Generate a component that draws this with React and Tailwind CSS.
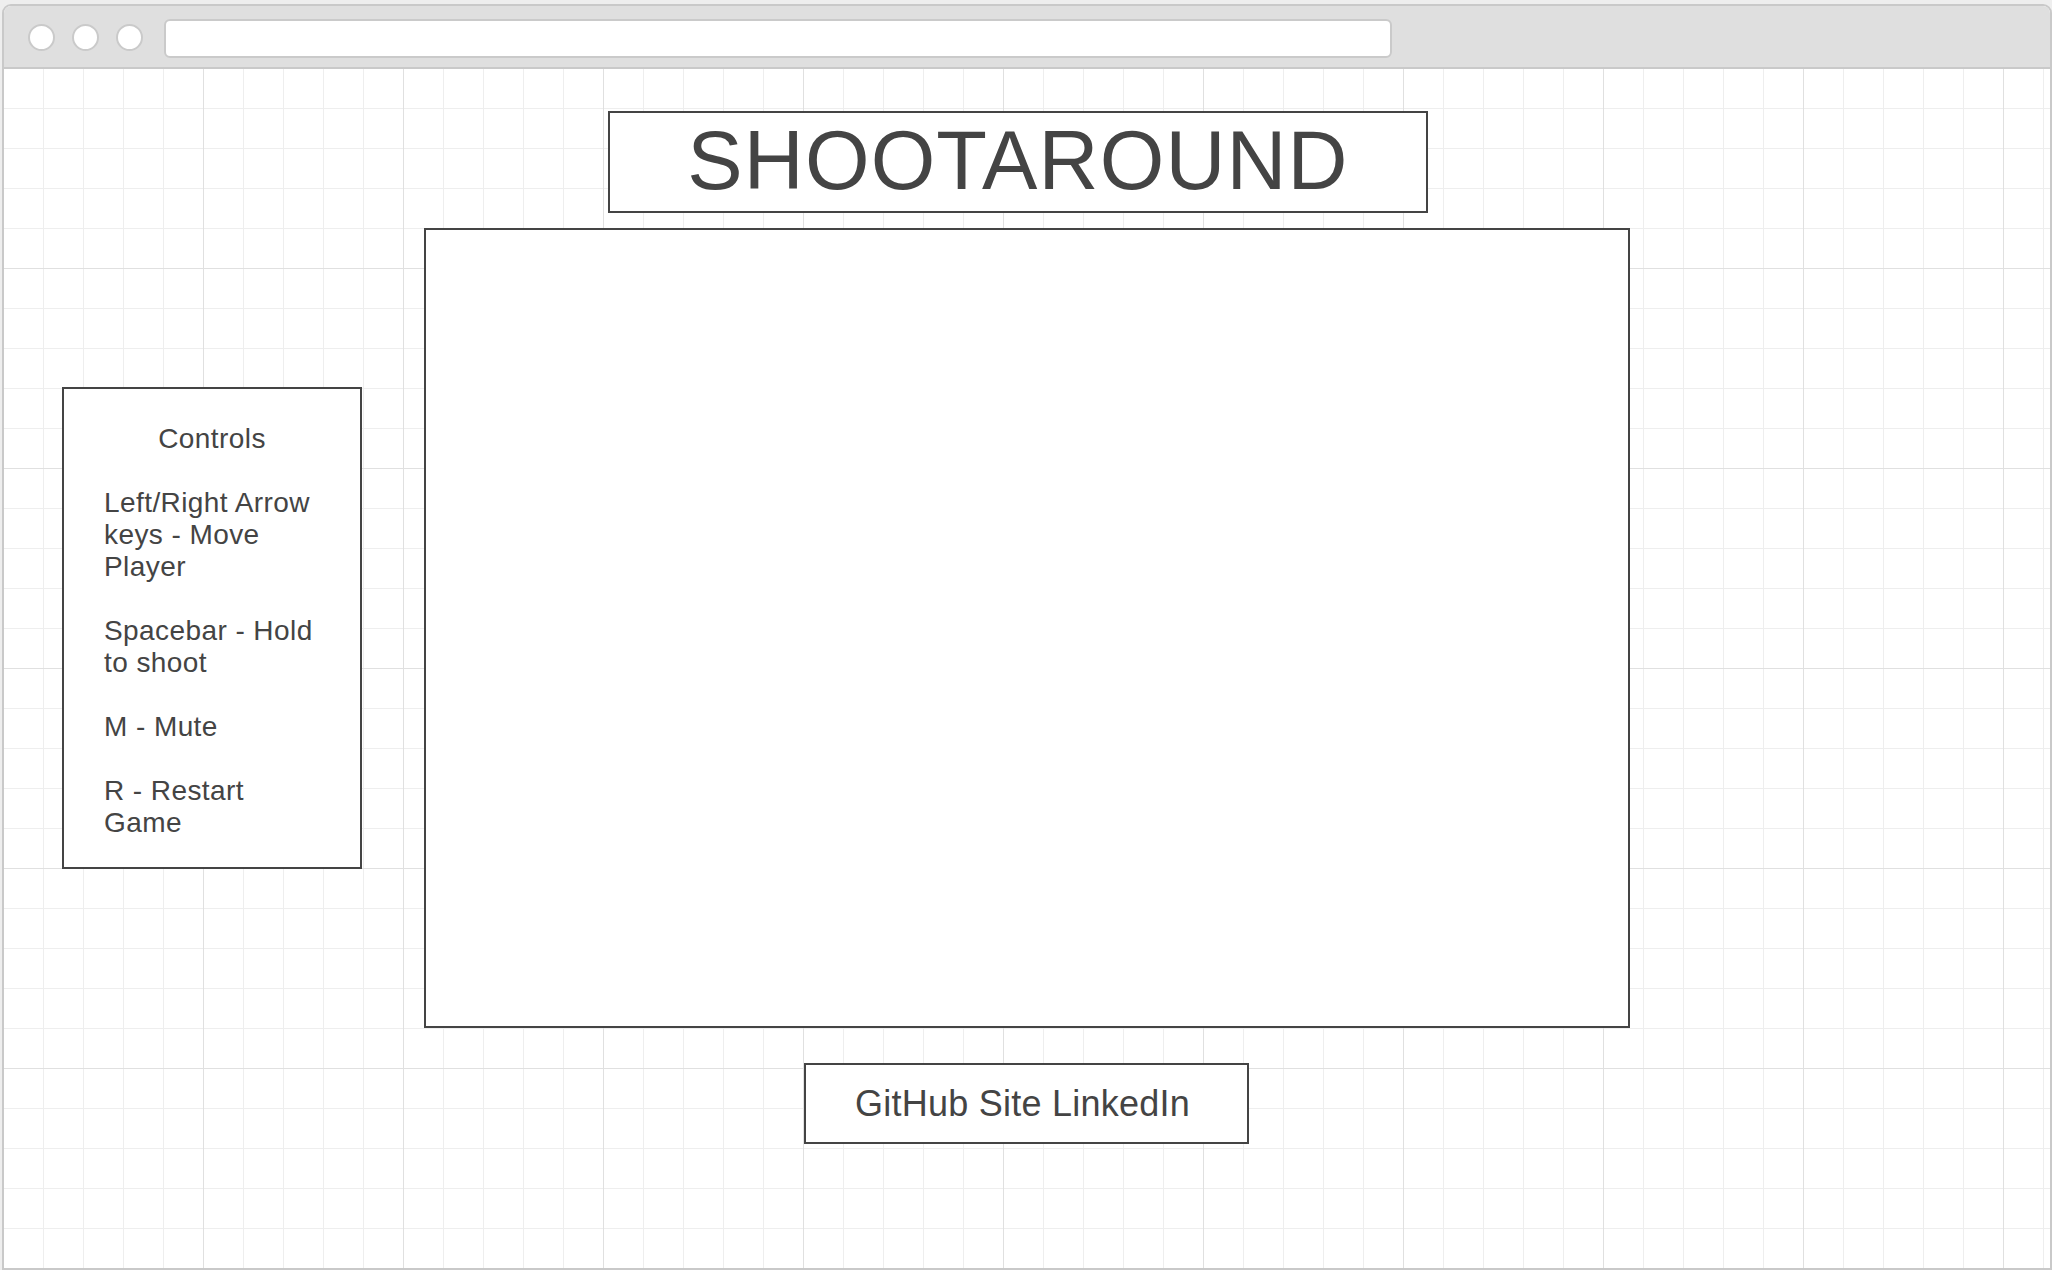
export default function App() {
  const font = { fontFamily: '"Liberation Sans", Arial, sans-serif' };
  return (
    <div
      className="w-[2052px] h-[1270px] bg-[#eeeeee] pt-[4px] pl-[2px] overflow-hidden text-[#444444]"
      style={font}
    >
      <div className="w-[2050px] h-[1266px] flex flex-col border-2 border-[#c9c9c9] rounded-t-[9px] overflow-hidden bg-white">
        {/* browser title bar */}
        <div className="h-[63px] shrink-0 bg-[#dfdfdf] border-b-2 border-[#c9c9c9] flex items-start pl-[24px]">
          <div className="mt-[18px] w-[27px] h-[27px] rounded-full bg-white border-2 border-[#cacaca]" />
          <div className="mt-[18px] ml-[17px] w-[27px] h-[27px] rounded-full bg-white border-2 border-[#cacaca]" />
          <div className="mt-[18px] ml-[17px] w-[27px] h-[27px] rounded-full bg-white border-2 border-[#cacaca]" />
          <div className="mt-[13px] ml-[21px] w-[1228px] h-[39px] rounded-[6px] bg-white border-2 border-[#cacaca]" />
        </div>

        {/* grid canvas */}
        <div className="flex-1 flex flex-col items-start [background-image:linear-gradient(to_right,#e0e0e0_1px,transparent_1px),linear-gradient(to_bottom,#e0e0e0_1px,transparent_1px),linear-gradient(to_right,#eeeeee_1px,transparent_1px),linear-gradient(to_bottom,#eeeeee_1px,transparent_1px)] [background-size:200px_200px,200px_200px,40px_40px,40px_40px] [background-position:-1px_-1px]">
          {/* title */}
          <div className="mt-[42px] ml-[604px] w-[820px] h-[102px] border-2 border-[#444444] bg-white flex items-center justify-center pb-[3px]">
            <span className="text-[83px] leading-none tracking-[0.014em]">SHOOTAROUND</span>
          </div>

          {/* controls + game */}
          <div className="mt-[15px] flex items-center">
            <div className="ml-[58px] w-[300px] h-[482px] border-2 border-[#444444] bg-white flex flex-col justify-center px-[40px] pt-[6px] text-[28px] leading-[32px] tracking-[0.015em]">
              <div className="text-center">Controls</div>
              <div className="mt-[32px]">Left/Right Arrow keys - Move Player</div>
              <div className="mt-[32px]">Spacebar - Hold to shoot</div>
              <div className="mt-[32px]">M - Mute</div>
              <div className="mt-[32px]">R - Restart Game</div>
            </div>
            <div className="ml-[62px] w-[1206px] h-[800px] border-2 border-[#444444] bg-white" />
          </div>

          {/* footer links */}
          <div className="mt-[35px] ml-[800px] w-[445px] h-[81px] border-2 border-[#444444] bg-white flex items-center justify-center pr-[8px]">
            <span className="text-[36px] leading-none tracking-[0.007em]">GitHub Site LinkedIn</span>
          </div>
        </div>
      </div>
    </div>
  );
}
